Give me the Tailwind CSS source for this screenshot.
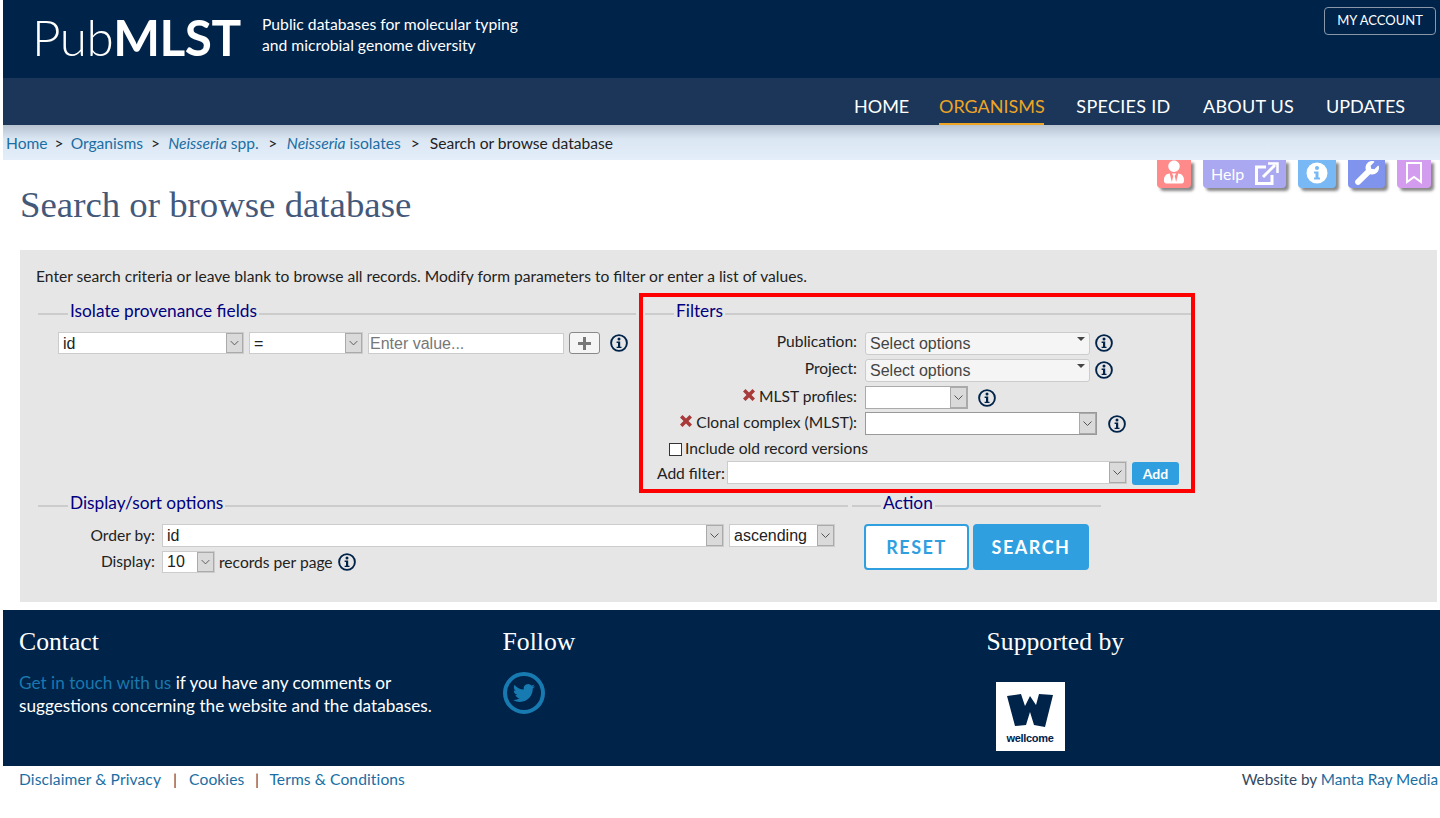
<!DOCTYPE html>
<html lang="en">
<head>
    <meta charset="UTF-8">
    <meta name="viewport" content="width=device-width, initial-scale=1.0">
    <title>Search or browse database</title>
    <script src="https://cdn.jsdelivr.net/npm/@tailwindcss/browser@4"></script>
</head>
<body class="bg-white text-[#222] font-[family-name:Lato,sans-serif] text-[15.6px]">
    <svg class="hidden">
        <symbol id="info" viewBox="0 0 18 18">
            <circle cx="9" cy="9" r="7.9" fill="none" stroke="#00234a" stroke-width="1.9"/>
            <circle cx="9" cy="5" r="1.5" fill="#00234a"/>
            <path d="M6.6 7.5h3.6v5.2h1.3v1.4H6.6v-1.4h1.4V8.9H6.6z" fill="#00234a"/>
        </symbol>
        <symbol id="chev" viewBox="0 0 15 19">
            <path d="M3.500 7.500l4 4 4-4" fill="none" stroke="#555" stroke-width="1"/>
        </symbol>
        <symbol id="cross" viewBox="0 0 14 14">
            <path d="M1 3.500L3.500 1 7 4.500 10.500 1 13 3.500 9.500 7 13 10.500 10.500 13 7 9.500 3.500 13 1 10.500 4.500 7z" fill="#a83a3a"/>
        </symbol>
    </svg>

    <div class="relative h-[818px] overflow-hidden pl-[3px]">
        <!-- Header -->
        <header class="relative h-[78px] bg-[#00234a] text-white">
            <div class="flex items-center pl-[29px] pt-[10px]">
                <div class="w-[230px] text-[49.500px] leading-[54px] font-light tracking-[-0.5px]">Pub<span class="font-bold">MLST</span></div>
                <p class="text-[15.700px] leading-[21px] pb-[4px]">Public databases for molecular typing<br>and microbial genome diversity</p>
            </div>
            <a class="absolute right-[4px] top-[7px] h-[28px] w-[112px] flex items-center justify-center rounded border border-[#8a97a8] text-[13px] pb-[1px]">MY ACCOUNT</a>
        </header>
        <nav class="h-[47px] bg-[#1b3659] flex justify-end gap-[32px] pr-[35px] text-[18px] text-white whitespace-nowrap text-center">
            <a class="w-[53px] h-[47px] leading-[56px]">HOME</a>
            <a class="w-[105px] h-[47px] leading-[56px] text-[#eea524] border-b-2 border-[#eea524]">ORGANISMS</a>
            <a class="w-[95px] h-[47px] leading-[56px] tracking-[0.3px]">SPECIES ID</a>
            <a class="w-[91px] h-[47px] leading-[56px] tracking-[0.2px]">ABOUT US</a>
            <a class="w-[79px] h-[47px] leading-[56px]">UPDATES</a>
        </nav>
        <div class="h-[35px] bg-gradient-to-b from-[#b7c3d1] via-[#dbe6f3] via-40% to-[#e4eefb] pl-[3px] leading-[37px] whitespace-nowrap">
            <a class="text-[#1a6ea3]">Home</a><span class="mx-[7px]">&gt;</span><a class="text-[#1a6ea3]">Organisms</a><span class="mx-[8px]">&gt;</span><a class="text-[#1a6ea3]"><i>Neisseria</i> spp.</a><span class="mx-[9.500px]">&gt;</span><a class="text-[#1a6ea3]"><i>Neisseria</i> isolates</a><span class="mx-[10px]">&gt;</span><span>Search or browse database</span>
        </div>

        <!-- Tabs -->
        <div class="absolute top-[160px] left-[1157px] flex gap-[12px] text-white">
            <div class="w-[34px] h-[28px] bg-[#ff8a8a] rounded-b shadow-[3px_3px_3px_#888] flex justify-center">
                <svg width="20" height="24" viewBox="0 0 448 512" fill="#fff"><path d="M224 256c70.7 0 128-57.3 128-128S294.7 0 224 0 96 57.3 96 128s57.3 128 128 128zm95.8 32.6L272 480l-32-136 32-56h-96l32 56-32 136-47.8-191.4C56.9 292 0 350.3 0 422.4V464c0 26.5 21.5 48 48 48h352c26.5 0 48-21.5 48-48v-41.6c0-72.1-56.900-130.4-128.200-133.800z"/></svg>
            </div>
            <div class="w-[83px] h-[28px] bg-[#aaa8f0] rounded-b shadow-[3px_3px_3px_#888] flex items-center pl-[8px] gap-[10px] text-[16px]">
                Help
                <svg width="25" height="24" viewBox="0 0 25 24" fill="none" stroke="#fff" stroke-width="3"><path d="M12 5H2.500v16.500H18V13"/><path d="M9 15L21 3"/><path d="M14 1.500h9.500V11" stroke-width="2.500"/></svg>
            </div>
            <div class="w-[38px] h-[28px] bg-[#78b8f5] rounded-b shadow-[3px_3px_3px_#888] flex justify-center">
                <svg width="22" height="24" viewBox="0 0 22 24"><circle cx="11" cy="13" r="10.500" fill="#fff"/><circle cx="11" cy="8" r="2" fill="#78b8f5"/><path d="M8 11.500h4.500v6H14v2H8v-2h1.500v-4H8z" fill="#78b8f5"/></svg>
            </div>
            <div class="w-[37px] h-[28px] bg-[#8094ee] rounded-b shadow-[3px_3px_3px_#888] flex justify-center pt-[1px]">
                <svg width="24" height="24" viewBox="0 0 512 512" fill="#fff"><path d="M507.730 109.100c-2.240-9.030-13.540-12.090-20.120-5.510l-74.360 74.360-67.880-11.310-11.310-67.880 74.360-74.360c6.620-6.620 3.430-17.900-5.660-20.160-47.380-11.740-99.550.91-136.580 37.930-39.640 39.640-50.550 97.100-34.050 147.200L18.740 402.760c-24.990 24.990-24.990 65.510 0 90.500 24.990 24.990 65.510 24.990 90.500 0l213.210-213.210c50.120 16.710 107.470 5.680 147.370-34.220 37.070-37.070 49.700-89.320 37.910-136.730z"/></svg>
            </div>
            <div class="w-[34px] h-[28px] bg-[#d49cef] rounded-b shadow-[3px_3px_3px_#888] flex justify-center">
                <svg width="16" height="24" viewBox="0 0 16 24" fill="none" stroke="#fff" stroke-width="2"><path d="M1 3h14v19l-7-5-7 5z"/></svg>
            </div>
        </div>

        <main class="pl-[17px] pr-[3px]">
            <h1 class="h-[90px] pt-[23px] text-[36.800px] leading-[44px] text-[#44597a] font-[family-name:'Liberation_Serif',serif]">Search or browse database</h1>

            <div class="h-[352px] bg-[#e6e6e6] pl-[16px] pt-[16px]">
                <p class="h-[33px] leading-[20px]">Enter search criteria or leave blank to browse all records. Modify form parameters to filter or enter a list of values.</p>

                <div class="flex h-[192px]">
                    <section class="w-[598px] ml-[2px] mr-[9px]">
                        <div class="flex items-center h-[24px] gap-[2px] text-[17.300px] text-[#000080]"><span class="w-[30px] h-[2px] mt-[5px] bg-[#ccc]"></span><span>Isolate provenance fields</span><span class="flex-1 h-[2px] mt-[5px] bg-[#ccc]"></span></div>
                        <div class="flex items-center pl-[20px] mt-[9px] font-[family-name:'Liberation_Sans',sans-serif] text-[16px]">
                            <div class="w-[186px] h-[22px] bg-white border border-[#ccc] flex justify-between items-center pl-[4px]"><span class="pt-[2px]">id</span><span class="w-[17px] h-[20px] bg-[#dadada] border border-[#aaa]"><svg width="15" height="18"><use href="#chev"/></svg></span></div>
                            <div class="ml-[5px] w-[114px] h-[22px] bg-white border border-[#ccc] flex justify-between items-center pl-[4px]"><span class="pt-[2px]">=</span><span class="w-[17px] h-[20px] bg-[#dadada] border border-[#aaa]"><svg width="15" height="18"><use href="#chev"/></svg></span></div>
                            <input class="ml-[5px] w-[196px] h-[21px] bg-white border border-[#ccc] px-[1px] pt-[2px] placeholder:text-[#777]" placeholder="Enter value...">
                            <div class="ml-[5px] w-[31px] h-[22px] bg-[#f5f5f5] border border-[#888] rounded-[3px] flex items-center justify-center">
                                <svg width="15" height="15" fill="#777"><path d="M6 1h3v5h5v3H9v5H6V9H1V6h5z"/></svg>
                            </div>
                            <svg class="ml-[10px]" width="18" height="18"><use href="#info"/></svg>
                        </div>
                    </section>

                    <section class="w-[546px]">
                        <div class="flex items-center h-[24px] gap-[2px] text-[17.300px] text-[#000080]"><span class="w-[29px] h-[2px] mt-[5px] bg-[#ccc]"></span><span>Filters</span><span class="flex-1 h-[2px] mt-[5px] bg-[#ccc]"></span></div>
                        <div class="grid grid-cols-[212px_1fr] gap-x-[8px] mt-[9px]">
                            <label class="h-[27px] text-right leading-[18px]">Publication:</label>
                            <div class="flex gap-[5px] h-[27px]">
                                <div class="relative w-[225px] h-[23px] bg-[#f5f5f5] border border-[#ccc] rounded-[3px] pl-[4px] text-[16px] leading-[22px] text-[#444] font-[family-name:'Liberation_Sans',sans-serif]">Select options<span class="absolute right-[4px] top-[4px] border-x-[4px] border-x-transparent border-t-[4px] border-t-[#444]"></span></div>
                                <svg class="mt-[2px]" width="18" height="18"><use href="#info"/></svg>
                            </div>
                            <label class="h-[27px] text-right leading-[18px]">Project:</label>
                            <div class="flex gap-[5px] h-[27px]">
                                <div class="relative w-[225px] h-[23px] bg-[#f5f5f5] border border-[#ccc] rounded-[3px] pl-[4px] text-[16px] leading-[22px] text-[#444] font-[family-name:'Liberation_Sans',sans-serif]">Select options<span class="absolute right-[4px] top-[4px] border-x-[4px] border-x-transparent border-t-[4px] border-t-[#444]"></span></div>
                                <svg class="mt-[2px]" width="18" height="18"><use href="#info"/></svg>
                            </div>
                            <label class="h-[26px] flex justify-end items-start gap-[3px] leading-[20px]">
                                <svg class="mt-[2px]" width="14" height="14"><use href="#cross"/></svg>MLST profiles:</label>
                            <div class="flex gap-[10px] h-[26px]">
                                <div class="w-[103px] h-[23px] bg-white border border-[#aaa] flex justify-end"><span class="w-[17px] h-[21px] bg-[#dadada] border border-[#aaa]"><svg width="15" height="19"><use href="#chev"/></svg></span></div>
                                <svg class="mt-[3px]" width="18" height="18"><use href="#info"/></svg>
                            </div>
                            <label class="h-[26px] flex justify-end items-start gap-[3px] leading-[20px]">
                                <svg class="mt-[2px]" width="14" height="14"><use href="#cross"/></svg>Clonal complex (MLST):</label>
                            <div class="flex gap-[11px] h-[26px]">
                                <div class="w-[232px] h-[23px] bg-white border border-[#999] flex justify-end"><span class="w-[17px] h-[21px] bg-[#dadada] border border-[#aaa]"><svg width="15" height="19"><use href="#chev"/></svg></span></div>
                                <svg class="mt-[3px]" width="18" height="18"><use href="#info"/></svg>
                            </div>
                        </div>
                        <label class="flex items-center pl-[24px] h-[22px] gap-[3px]"><input type="checkbox" class="appearance-none w-[13px] h-[13px] bg-white border border-[#333]">Include old record versions</label>
                        <div class="flex items-start h-[24px] mt-[1px] pl-[12px]">
                            <span class="w-[66px] whitespace-nowrap leading-[24px]">Add filter:</span>
                            <div class="ml-[4px] w-[400px] h-[23px] bg-white border border-[#ccc] flex justify-end"><span class="w-[17px] h-[21px] bg-[#dadada] border border-[#aaa]"><svg width="15" height="19"><use href="#chev"/></svg></span></div>
                            <button class="ml-[5px] mt-[1px] w-[47px] h-[23px] bg-[#2f9fdf] rounded-[3px] text-white font-bold text-[14px]">Add</button>
                        </div>
                    </section>
                </div>

                <div class="flex">
                    <section class="w-[810px] ml-[2px] mr-[4px]">
                        <div class="flex items-center h-[24px] gap-[2px] text-[17.300px] text-[#000080]"><span class="w-[30px] h-[2px] mt-[5px] bg-[#ccc]"></span><span>Display/sort options</span><span class="flex-1 h-[2px] mt-[5px] bg-[#ccc]"></span></div>
                        <div class="flex items-center mt-[9px]">
                            <span class="w-[117px] text-right mr-[7px] leading-[20px] pb-[2px]">Order by:</span>
                            <div class="w-[562px] h-[23px] bg-white border border-[#ccc] flex justify-between items-center pl-[4px] text-[16px] font-[family-name:'Liberation_Sans',sans-serif]"><span>id</span><span class="w-[17px] h-[21px] bg-[#dadada] border border-[#aaa]"><svg width="15" height="19"><use href="#chev"/></svg></span></div>
                            <div class="ml-[5px] w-[106px] h-[23px] bg-white border border-[#ccc] flex justify-between items-center pl-[4px] text-[16px] font-[family-name:'Liberation_Sans',sans-serif]"><span>ascending</span><span class="w-[17px] h-[21px] bg-[#dadada] border border-[#aaa]"><svg width="15" height="19"><use href="#chev"/></svg></span></div>
                        </div>
                        <div class="flex items-center mt-[4px]">
                            <span class="w-[117px] text-right mr-[7px] leading-[20px] pb-[2px]">Display:</span>
                            <div class="w-[53px] h-[22px] bg-white border border-[#ccc] flex justify-between items-center pl-[4px] text-[16px] font-[family-name:'Liberation_Sans',sans-serif]"><span>10</span><span class="w-[17px] h-[20px] bg-[#dadada] border border-[#aaa]"><svg width="15" height="18"><use href="#chev"/></svg></span></div>
                            <span class="ml-[4px] leading-[20px]">records per page</span>
                            <svg class="ml-[5px]" width="18" height="18"><use href="#info"/></svg>
                        </div>
                    </section>
                    <section class="w-[249px]">
                        <div class="flex items-center h-[24px] gap-[2px] text-[17.300px] text-[#000080]"><span class="w-[29px] h-[2px] mt-[5px] bg-[#ccc]"></span><span>Action</span><span class="flex-1 h-[2px] mt-[5px] bg-[#ccc]"></span></div>
                        <div class="flex gap-[4px] pl-[12px] mt-[9px]">
                            <button class="w-[105px] h-[46px] bg-white border-2 border-[#2f9fdf] rounded-[4px] text-[#2f9fdf] font-bold text-[18px] tracking-[1.500px]">RESET</button>
                            <button class="w-[116px] h-[46px] bg-[#2f9fdf] rounded-[4px] text-white font-bold text-[18px] tracking-[1.500px]">SEARCH</button>
                        </div>
                    </section>
                </div>
            </div>
        </main>

        <!-- Highlight around filters -->
        <div class="absolute left-[639px] top-[293px] w-[556px] h-[200px] border-4 border-[#ff0000] pointer-events-none"></div>

        <footer class="mt-[8px] h-[156px] bg-[#00234a] text-white grid grid-cols-[483.500px_484px_1fr] pl-[16px] pt-[15px]">
            <div>
                <h3 class="text-[25.700px] leading-[34px] font-[family-name:'Liberation_Serif',serif]">Contact</h3>
                <p class="mt-[12px] text-[17.200px] leading-[23px]"><a class="text-[#1a78ad]">Get in touch with us</a> if you have any comments or<br>suggestions concerning the website and the databases.</p>
            </div>
            <div>
                <h3 class="text-[25.700px] leading-[34px] font-[family-name:'Liberation_Serif',serif]">Follow</h3>
                <div class="mt-[13px] w-[42px] h-[42px] rounded-full border-4 border-[#177bb1] flex items-center justify-center">
                    <svg width="22" height="22" viewBox="0 0 24 24" fill="#177bb1"><path d="M23.953 4.57a10 10 0 01-2.825.775 4.958 4.958 0 002.163-2.723c-.951.555-2.005.959-3.127 1.184a4.92 4.92 0 00-8.384 4.482C7.69 8.095 4.067 6.13 1.64 3.162a4.822 4.822 0 00-.666 2.475c0 1.71.87 3.213 2.188 4.096a4.904 4.904 0 01-2.228-.616v.06a4.923 4.923 0 003.946 4.827 4.996 4.996 0 01-2.212.085 4.936 4.936 0 004.604 3.417 9.867 9.867 0 01-6.102 2.105c-.39 0-.779-.023-1.17-.067a13.995 13.995 0 007.557 2.209c9.053 0 13.998-7.496 13.998-13.985 0-.21 0-.42-.015-.63A9.935 9.935 0 0024 4.59z"/></svg>
                </div>
            </div>
            <div>
                <h3 class="text-[25.700px] leading-[34px] font-[family-name:'Liberation_Serif',serif]">Supported by</h3>
                <div class="ml-[9px] mt-[23px] w-[69px] h-[69px] bg-white flex flex-col items-center pt-[11px]">
                    <svg width="46" height="35" viewBox="0 0 46 35" fill="#00234a"><path d="M0 3l14-2 4 12 5-10 6 9 3-11 14 1-8 32-11-2-4-13-4 13-11 1z"/></svg>
                    <span class="mt-[3px] text-[11px] leading-[14px] font-bold tracking-[-0.300px] text-[#00234a] font-[family-name:'Liberation_Sans',sans-serif]">wellcome</span>
                </div>
            </div>
        </footer>
        <div class="flex justify-between pl-[16px] pr-[2px] pt-[2px] text-[#33495f]">
            <p class="tracking-[0.1px]"><a class="text-[#1a6ea3]">Disclaimer &amp; Privacy</a><span class="mx-[12px]">|</span><a class="text-[#1a6ea3]">Cookies</a><span class="mx-[10.500px]">|</span><a class="text-[#1a6ea3]">Terms &amp; Conditions</a></p>
            <p class="text-[15.300px]">Website by <a class="text-[#1a6ea3]">Manta Ray Media</a></p>
        </div>
    </div>
</body>
</html>
